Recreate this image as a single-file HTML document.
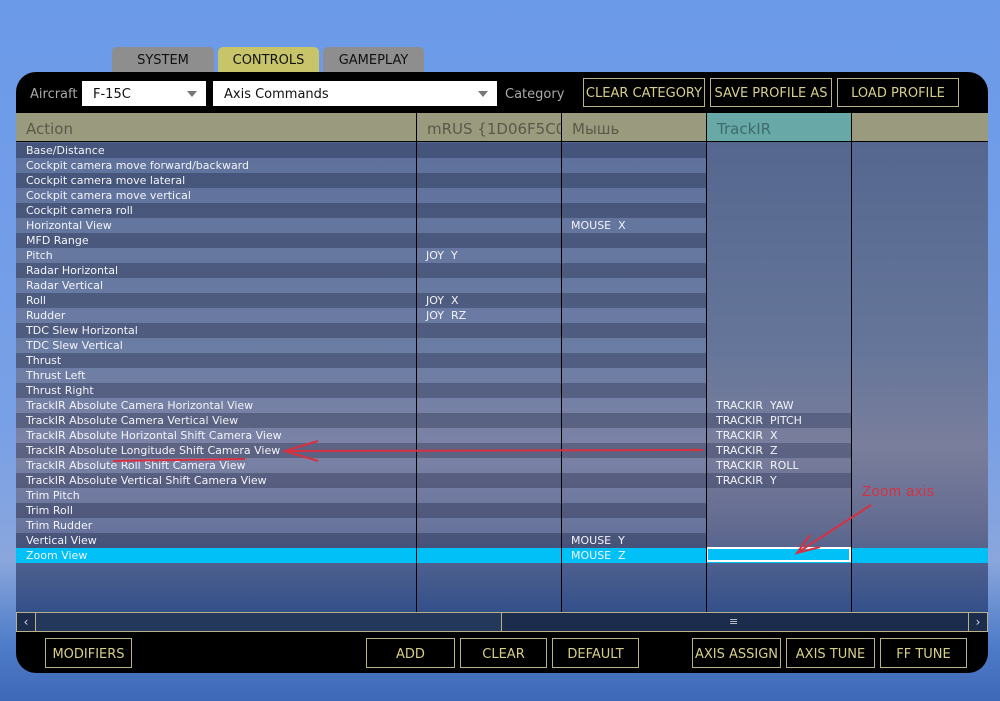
<!DOCTYPE html>
<html><head><meta charset="utf-8"><style>
*{margin:0;padding:0;box-sizing:border-box}
body{width:1000px;height:701px;overflow:hidden;position:relative;font-family:"DejaVu Sans","Liberation Sans",sans-serif;background:linear-gradient(#6b9ae9 0%,#78a0e6 60%,#8aa6dc 80%,#4f7cc8 92%,#3d68b8 100%)}
.a{position:absolute}
.tab{position:absolute;top:47px;height:26px;background:#8e8e8e;border-radius:5px 5px 0 0;font-size:13px;text-align:center;line-height:28px;color:#111}
.panel{position:absolute;left:16px;top:72px;width:972px;height:601px;background:#000;border-radius:20px}
.combo{position:absolute;top:81px;height:25px;background:#fff;font-size:13px;line-height:27px;padding-left:11px;color:#111}
.combo:after{content:"";position:absolute;right:9px;top:10px;border-left:5px solid transparent;border-right:5px solid transparent;border-top:6px solid #777}
.btn{position:absolute;border:1px solid #b8b286;color:#d6cf8c;font-size:13px;text-align:center;background:#000}
.hd{position:absolute;top:113px;height:29px;background:#999a7e;color:#5a5a48;font-size:15px;line-height:33px;padding-left:10px;border-right:1px solid #000;border-bottom:1px solid #000;overflow:hidden;white-space:nowrap}
.grid{position:absolute;left:16px;top:142px;width:972px;height:470px;background:linear-gradient(#55678f 0%,#66769a 45%,#7a7e9c 65%,#626b90 82%,#33508a 100%)}
.r{position:absolute;left:16px;width:690px;height:15px;font-size:11px;line-height:16px;color:#f2f4f8;padding-left:10px;white-space:nowrap}
.d{background:rgba(35,45,80,.33)}.l{background:rgba(130,150,200,.22)}
.c{position:absolute;font-size:11px;line-height:16px;color:#f2f4f8;height:15px;white-space:nowrap}
.vl{position:absolute;top:113px;width:1px;height:499px;background:#000}
</style></head><body>
<div class="tab" style="left:112px;width:102px">SYSTEM</div>
<div class="tab" style="left:218px;width:101px;background:#c8c46a">CONTROLS</div>
<div class="tab" style="left:323px;width:101px">GAMEPLAY</div>
<div class="panel"></div>
<div class="a" style="left:30px;top:87px;font-size:13px;color:#aaa">Aircraft</div>
<div class="combo" style="left:82px;width:124px">F-15C</div>
<div class="combo" style="left:213px;width:284px">Axis Commands</div>
<div class="a" style="left:505px;top:87px;font-size:13px;color:#aaa">Category</div>
<div class="btn" style="left:583px;top:78px;width:122px;height:29px;line-height:30px">CLEAR CATEGORY</div>
<div class="btn" style="left:710px;top:78px;width:122px;height:29px;line-height:30px">SAVE PROFILE AS</div>
<div class="btn" style="left:837px;top:78px;width:122px;height:29px;line-height:30px">LOAD PROFILE</div>
<div class="grid"></div>
<div class="hd" style="left:16px;width:401px">Action</div>
<div class="hd" style="left:417px;width:145px">mRUS {1D06F5C0</div>
<div class="hd" style="left:562px;width:145px">Мышь</div>
<div class="hd" style="left:707px;width:145px;background:#68a8a6;color:#3e6c6c">TrackIR</div>
<div class="hd" style="left:852px;width:136px;border-right:none"></div>

<div class="r d" style="top:143px">Base/Distance</div>
<div class="r l" style="top:158px">Cockpit camera move forward/backward</div>
<div class="r d" style="top:173px">Cockpit camera move lateral</div>
<div class="r l" style="top:188px">Cockpit camera move vertical</div>
<div class="r d" style="top:203px">Cockpit camera roll</div>
<div class="r l" style="top:218px">Horizontal View</div>
<div class="r d" style="top:233px">MFD Range</div>
<div class="r l" style="top:248px">Pitch</div>
<div class="r d" style="top:263px">Radar Horizontal</div>
<div class="r l" style="top:278px">Radar Vertical</div>
<div class="r d" style="top:293px">Roll</div>
<div class="r l" style="top:308px">Rudder</div>
<div class="r d" style="top:323px">TDC Slew Horizontal</div>
<div class="r l" style="top:338px">TDC Slew Vertical</div>
<div class="r d" style="top:353px">Thrust</div>
<div class="r l" style="top:368px">Thrust Left</div>
<div class="r d" style="top:383px">Thrust Right</div>
<div class="r l" style="top:398px">TrackIR Absolute Camera Horizontal View</div>
<div class="r d" style="top:413px">TrackIR Absolute Camera Vertical View</div>
<div class="r l" style="top:428px">TrackIR Absolute Horizontal Shift Camera View</div>
<div class="r d" style="top:443px">TrackIR Absolute Longitude Shift Camera View</div>
<div class="r l" style="top:458px">TrackIR Absolute Roll Shift Camera View</div>
<div class="r d" style="top:473px">TrackIR Absolute Vertical Shift Camera View</div>
<div class="r l" style="top:488px">Trim Pitch</div>
<div class="r d" style="top:503px">Trim Roll</div>
<div class="r l" style="top:518px">Trim Rudder</div>
<div class="r d" style="top:533px">Vertical View</div>
<div class="r" style="top:548px;width:972px;background:#00c0f8">Zoom View</div>

<div class="c" style="left:707px;top:413px;width:145px;background:rgba(35,45,80,.33)"></div>
<div class="c" style="left:707px;top:443px;width:145px;background:rgba(35,45,80,.33)"></div>
<div class="c" style="left:707px;top:473px;width:145px;background:rgba(35,45,80,.33)"></div>

<div class="c" style="left:571px;top:218px">MOUSE&nbsp; X</div>
<div class="c" style="left:426px;top:248px">JOY&nbsp; Y</div>
<div class="c" style="left:426px;top:293px">JOY&nbsp; X</div>
<div class="c" style="left:426px;top:308px">JOY&nbsp; RZ</div>
<div class="c" style="left:716px;top:398px">TRACKIR&nbsp; YAW</div>
<div class="c" style="left:716px;top:413px">TRACKIR&nbsp; PITCH</div>
<div class="c" style="left:716px;top:428px">TRACKIR&nbsp; X</div>
<div class="c" style="left:716px;top:443px">TRACKIR&nbsp; Z</div>
<div class="c" style="left:716px;top:458px">TRACKIR&nbsp; ROLL</div>
<div class="c" style="left:716px;top:473px">TRACKIR&nbsp; Y</div>
<div class="c" style="left:571px;top:533px">MOUSE&nbsp; Y</div>
<div class="c" style="left:571px;top:548px">MOUSE&nbsp; Z</div>
<div class="a" style="left:706px;top:547px;width:145px;height:15px;border:2px solid #fff"></div>

<div class="vl" style="left:416px"></div>
<div class="vl" style="left:561px"></div>
<div class="vl" style="left:706px"></div>
<div class="vl" style="left:851px"></div>

<svg class="a" style="left:0;top:0" width="1000" height="701">
<g stroke="#d83040" stroke-width="2" fill="none">
<line x1="703" y1="450" x2="285" y2="451"/>
<polyline points="318,441 285,451 318,461"/>
<line x1="113" y1="461" x2="245" y2="459"/>
<line x1="871" y1="505" x2="797" y2="553"/>
<polyline points="810,535 797,553 820,547"/>
</g>
<text x="862" y="496" fill="#d83040" font-size="14.5" font-family="Liberation Sans,sans-serif" textLength="72">Zoom axis</text>
</svg>

<div class="a" style="left:16px;top:612px;width:972px;height:20px;background:#1c2c4c;border:1px solid #b8b286"></div>
<div class="a" style="left:36px;top:613px;width:466px;height:18px;background:#24385c;border-right:1px solid #b8b286"></div>
<div class="a" style="left:17px;top:613px;width:19px;height:18px;border-right:1px solid #b8b286;color:#ddd;font-size:12px;text-align:center;line-height:18px">‹</div>
<div class="a" style="left:968px;top:613px;width:19px;height:18px;border-left:1px solid #b8b286;color:#ddd;font-size:12px;text-align:center;line-height:18px">›</div>
<div class="a" style="left:729px;top:613px;color:#ccc;font-size:11px;line-height:18px">≡</div>

<div class="btn" style="left:45px;top:638px;width:87px;height:30px;line-height:31px">MODIFIERS</div>
<div class="btn" style="left:366px;top:638px;width:89px;height:30px;line-height:31px">ADD</div>
<div class="btn" style="left:460px;top:638px;width:87px;height:30px;line-height:31px">CLEAR</div>
<div class="btn" style="left:552px;top:638px;width:87px;height:30px;line-height:31px">DEFAULT</div>
<div class="btn" style="left:692px;top:638px;width:89px;height:30px;line-height:31px">AXIS ASSIGN</div>
<div class="btn" style="left:786px;top:638px;width:89px;height:30px;line-height:31px">AXIS TUNE</div>
<div class="btn" style="left:880px;top:638px;width:87px;height:30px;line-height:31px">FF TUNE</div>
</body></html>
